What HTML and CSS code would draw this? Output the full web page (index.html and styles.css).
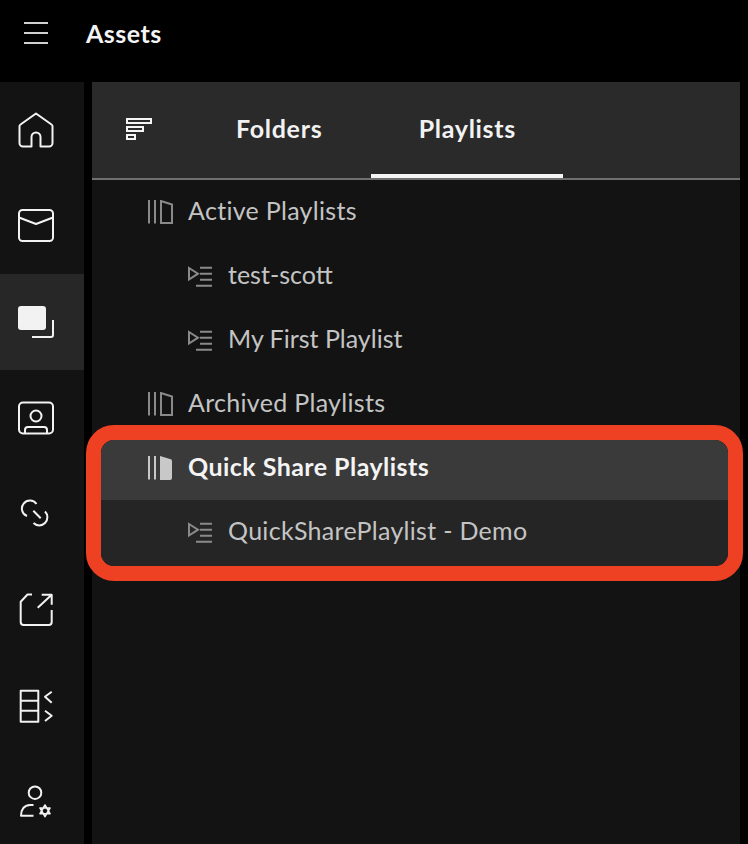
FILE: index.html
```html
<!DOCTYPE html>
<html lang="en">
<head>
    <meta charset="UTF-8">
    <meta name="viewport" content="width=device-width, initial-scale=1.0">
    <title>Assets</title>
    <link rel="stylesheet" href="styles.css">
</head>
<body>
    <header class="topbar">
        <svg class="menu-icon" width="24" height="22" viewBox="0 0 24 22"><path d="M0 1H24M0 11H24M0 21H24"/></svg>
        <div class="topbar-title">Assets</div>
    </header>

    <div class="app">
        <nav class="sidebar">
            <div class="side-item">
                <svg class="side-icon" width="36" height="36" viewBox="0 0 36 36"><path d="M18 1.500 2.500 12.500a2 2 0 0 0-1 2V31a3.500 3.500 0 0 0 3.500 3.500h8.500V25a4.500 4.500 0 0 1 9 0v9.500H31a3.500 3.500 0 0 0 3.500-3.500V14.500a2 2 0 0 0-1-2Z"/></svg>
            </div>
            <div class="side-item">
                <svg class="side-icon" width="36" height="36" viewBox="0 0 36 36"><rect x="1" y="2" width="34" height="31" rx="3.500"/><path d="M1 9.500 18 16 35 9.500"/></svg>
            </div>
            <div class="side-item active">
                <svg class="side-icon" width="36" height="36" viewBox="0 0 36 36"><rect class="solid" x="0" y="2" width="28" height="24" rx="3"/><path d="M14 33H33a2 2 0 0 0 2-2V16"/></svg>
            </div>
            <div class="side-item">
                <svg class="side-icon" width="36" height="36" viewBox="0 0 36 36"><rect x="1" y="2.500" width="34" height="31" rx="4"/><circle cx="18" cy="16" r="5.500"/><path d="M7 33.500V30a3 3 0 0 1 3-3H26a3 3 0 0 1 3 3v3.500"/></svg>
            </div>
            <div class="side-item">
                <svg class="side-icon" width="36" height="36" viewBox="0 0 36 36"><path d="M18.500 8A8 8 0 1 0 9 20M27 15.500A8 8 0 1 1 15.500 27M15.300 14.700 22.700 22.300"/></svg>
            </div>
            <div class="side-item">
                <svg class="side-icon" width="36" height="36" viewBox="0 0 36 36"><path d="M14 2.500H9.500L2.700 9.700V30a3 3 0 0 0 3 3H30.700a3 3 0 0 0 3-3V18M19.700 15.700 33.700 2.700M23.700 2.700H33.700V12.700"/></svg>
            </div>
            <div class="side-item">
                <svg class="side-icon" width="36" height="36" viewBox="0 0 36 36"><path d="M2.700 2.700H20.300V33.700H2.700ZM2.700 12.700H20.300M2.700 22.700H20.300M33.700 3.700 27 8.700 33.700 14.700M27 22.700 33.700 27.700 27 33"/></svg>
            </div>
            <div class="side-item">
                <svg class="side-icon" width="36" height="36" viewBox="0 0 36 36"><circle cx="17" cy="8.700" r="6.300"/><path d="M15.500 21H12C6 21 3 26 3 31.700H15.500"/><path class="thin" d="M27 21 32 29.700H22ZM27 32.700 22 24H32Z"/></svg>
            </div>
        </nav>

        <main class="panel">
            <div class="tabs">
                <svg class="filter-icon" width="26" height="22" viewBox="0 0 26 22"><path d="M1 1H25V5H1ZM1 9H17V13H1ZM1 17H9V21H1Z"/></svg>
                <div class="tab tab-folders">Folders</div>
                <div class="tab tab-playlists">Playlists</div>
            </div>

            <div class="row group-row">
                <svg class="lib-icon" width="26" height="24" viewBox="0 0 26 24"><path d="M2 0V23.500M8 0V23.500M14 1V23H25V4.500Z"/></svg>
                <span>Active Playlists</span>
            </div>
            <div class="row child-row">
                <svg class="list-icon" width="24" height="22" viewBox="0 0 24 22"><path d="M1 3V14.500L10 8.700ZM12 2.700H24M12 8.700H24M12 14.700H24M8 20.700H24"/></svg>
                <span>test-scott</span>
            </div>
            <div class="row child-row">
                <svg class="list-icon" width="24" height="22" viewBox="0 0 24 22"><path d="M1 3V14.500L10 8.700ZM12 2.700H24M12 8.700H24M12 14.700H24M8 20.700H24"/></svg>
                <span>My First Playlist</span>
            </div>
            <div class="row group-row">
                <svg class="lib-icon" width="26" height="24" viewBox="0 0 26 24"><path d="M2 0V23.500M8 0V23.500M14 1V23H25V4.500Z"/></svg>
                <span>Archived Playlists</span>
            </div>

            <div class="callout">
                <div class="row group-row selected">
                    <svg class="lib-icon" width="26" height="24" viewBox="0 0 26 24"><path d="M2 0V23.500M8 0V23.500"/><path class="solid" d="M13 0 23 3a2 2 0 0 1 2 2V22a2 2 0 0 1-2 2H13Z"/></svg>
                    <span>Quick Share Playlists</span>
                </div>
                <div class="row child-row open">
                    <svg class="list-icon" width="24" height="22" viewBox="0 0 24 22"><path d="M1 3V14.500L10 8.700ZM12 2.700H24M12 8.700H24M12 14.700H24M8 20.700H24"/></svg>
                    <span>QuickSharePlaylist - Demo</span>
                </div>
            </div>
        </main>
    </div>
</body>
</html>
```

FILE: styles.css
```css
* {
    box-sizing: border-box;
}
html, body {
    margin: 0;
    height: 844px;
    overflow: hidden;
    background-color: #000;
    font-family: Lato, "Noto Sans", sans-serif;
}
svg {
    fill: none;
    flex: none;
}

.topbar {
    height: 82px;
    display: flex;
    align-items: center;
    padding: 0 0 16px 24px;
    color: #f4f4f4;
}
.menu-icon {
    stroke: #d0d0d0;
    stroke-width: 2;
}
.topbar-title {
    margin-left: 38px;
    font-size: 25px;
    font-weight: 700;
    letter-spacing: 0.5px;
}

.app {
    display: flex;
    gap: 8px;
    height: 762px;
}

.sidebar {
    width: 84px;
    background-color: #131313;
    flex: none;
}
.side-item {
    height: 96px;
    display: flex;
    align-items: center;
    padding-left: 18px;
}
.side-item.active {
    background-color: #272727;
}
.side-icon {
    stroke: #f2f2f2;
    stroke-width: 2;
    stroke-linejoin: round;
}
.side-icon .solid {
    fill: #f2f2f2;
    stroke: none;
}
.side-icon .thin {
    stroke-width: 1.6;
}

.panel {
    width: 648px;
    background-color: #131313;
}
.tabs {
    height: 98px;
    display: flex;
    background-color: #2a2a2a;
    border-bottom: 2px solid #6f6f6f;
    color: #f2f2f2;
    font-size: 25px;
    font-weight: 700;
    letter-spacing: 0.7px;
}
.filter-icon {
    stroke: #f5f5f5;
    stroke-width: 2;
    margin: 36px 0 0 34px;
}
.tab {
    height: 96px;
    border-bottom: 4px solid transparent;
    display: flex;
    align-items: center;
    justify-content: center;
}
.tab-folders {
    margin-left: 84px;
}
.tab-playlists {
    width: 192px;
    margin-left: 49px;
    border-bottom-color: #f5f5f5;
}

.row {
    height: 64px;
    display: flex;
    align-items: center;
    font-size: 25px;
    letter-spacing: 0.3px;
    color: #c4c4c4;
}
.row span {
    margin-bottom: 4px;
}
.group-row {
    padding-left: 55px;
    gap: 15px;
}
.child-row {
    padding-left: 96px;
    gap: 16px;
    letter-spacing: 0;
}
.lib-icon, .list-icon {
    stroke: #8a8a8a;
    stroke-width: 2;
}

/* red annotation round the quick share group */
.callout {
    position: relative;
    width: 657px;
    margin: -11px 0 0 -6px;
    border: 15px solid #ee4023;
    border-radius: 28px;
    overflow: hidden;
}
.callout .group-row {
    padding-left: 46px;
}
.callout .child-row {
    padding-left: 87px;
}
.row.selected {
    height: 60px;
    padding-bottom: 4px;
    background-color: #3a3a3a;
    color: #f4f4f4;
    font-weight: 700;
    letter-spacing: 0.45px;
}
.row.selected .lib-icon {
    stroke: #c8c8c8;
}
.lib-icon .solid {
    fill: #c8c8c8;
    stroke: none;
}
.row.open {
    height: 66px;
    padding-bottom: 2px;
    letter-spacing: 0.3px;
    background-color: #252525;
}
```
